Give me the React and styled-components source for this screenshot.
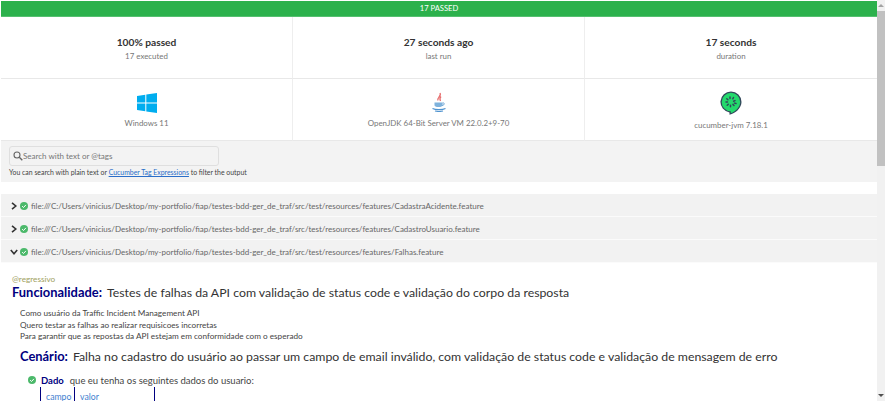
import React from "react";
import styled, { createGlobalStyle } from "styled-components";

const Global = createGlobalStyle`
  html, body { margin: 0; padding: 0; background: #fff; width: 886px; height: 401px; overflow: hidden; }
  * { box-sizing: border-box; }
  body { font-family: Lato, "Open Sans", "Liberation Sans", sans-serif; color: #333; }
`;

const Page = styled.div`
  display: flex;
  width: 886px;
  height: 401px;
  overflow: hidden;
`;
const Main = styled.main`
  width: 877px;
  padding: 1px 0 0 1px;
  overflow: hidden;
  flex: none;
`;
const Scrollbar = styled.div`
  width: 8px;
  height: 401px;
  background: #f1f1f1;
  display: flex;
  flex-direction: column;
  align-items: center;
  justify-content: space-between;
  position: relative;
`;
const Arrow = styled.div`
  width: 0;
  height: 0;
  margin: 4px 0;
  border-left: 3px solid transparent;
  border-right: 3px solid transparent;
  ${(p) => (p.$down ? "border-top: 3px solid #505050;" : "border-bottom: 3px solid #a3a3a3;")}
`;
const Thumb = styled.div`
  position: absolute;
  top: 11px;
  left: 0;
  width: 8px;
  height: 155px;
  background: #c1c1c1;
`;
const Banner = styled.div`
  height: 16px;
  background: #2cb14c;
  color: #fff;
  font-size: 7.6px;
  line-height: 15px;
  text-align: center;
  border-bottom: 1px solid #55c070;
`;
const Grid = styled.section`
  display: grid;
  grid-template-columns: repeat(3, 1fr);
  grid-auto-rows: 62px;
`;
const Cell = styled.div`
  display: flex;
  flex-direction: column;
  align-items: center;
  justify-content: center;
  padding-top: 2px;
  border-right: 1px solid #eeeeee;
  border-bottom: 1px solid #e8e8e8;
  &:nth-child(3n) { border-right: 0; }
`;
const Big = styled.div`
  font-size: 10.2px;
  font-weight: 700;
  line-height: 14px;
  color: #333;
`;
const Small = styled.div`
  font-size: 7.9px;
  line-height: 12px;
  color: #777;
  margin-top: ${(p) => p.$gap || 0}px;
`;
const SearchArea = styled.section`
  height: 41px;
  background: #f3f3f3;
  padding: 5px 8px 0;
`;
const SearchBox = styled.div`
  width: 210px;
  height: 20px;
  display: flex;
  align-items: center;
  padding-left: 3px;
  border: 1px solid #dfdfdf;
  border-radius: 3px;
  font-size: 8px;
  color: #767676;
`;
const Help = styled.div`
  font-size: 6.9px;
  line-height: 9px;
  margin-top: 2px;
  color: #444;
`;
const HelpLink = styled.a`
  color: #2a6ec9;
  text-decoration: underline;
`;
const Features = styled.section`
  margin-top: 12px;
`;
const Row = styled.div`
  height: 23px;
  background: #f2f2f2;
  display: flex;
  align-items: center;
  padding: 1px 0 0 9px;
  gap: 2px;
  font-size: 8px;
  color: #666;
  border-bottom: 1px solid #fbfbfb;
`;
const Chevron = styled.svg`
  width: 8px;
  height: 8px;
  flex: none;
  stroke: #333;
  stroke-width: 1.6;
  fill: none;
`;
const Check = styled.svg`
  width: 8px;
  height: 8px;
  flex: none;
  margin-right: 1px;
`;
const Body = styled.article`
  padding: 11px 0 0 11px;
`;
const Tag = styled.div`
  font-size: 8.2px;
  line-height: 10px;
  color: #a0a060;
`;
const Feature = styled.h1`
  margin: 0;
  font-size: 12.3px;
  line-height: 16px;
  font-weight: 400;
  color: #333;
  white-space: nowrap;
`;
const Keyword = styled.span`
  font-size: 12.9px;
  font-weight: 700;
  color: #000080;
  margin-right: ${(p) => p.$gap || 5}px;
`;
const Description = styled.div`
  margin: 7px 0 0 8px;
  font-size: 8.2px;
  line-height: 11.5px;
  color: #444;
`;
const Scenario = styled(Feature)`
  margin: 5px 0 0 8px;
`;
const Step = styled.div`
  display: flex;
  align-items: center;
  margin: 9px 0 0 16px;
  font-size: 9.5px;
  line-height: 13px;
  color: #444;
`;
const StepKeyword = styled.span`
  font-weight: 700;
  color: #000080;
  margin: 0 6px 0 4px;
`;
const Table = styled.div`
  display: flex;
  margin: 0 0 0 28px;
  height: 20px;
  border-left: 1px solid #000080;
`;
const Column = styled.div`
  width: ${(p) => p.$w}px;
  padding: 4px 0 0 5px;
  font-size: 8.7px;
  line-height: 11px;
  color: #3f7fd0;
  border-right: 1px solid #000080;
`;

const Ok = () => (
  <Check viewBox="0 0 16 16">
    <circle cx="8" cy="8" r="8" fill="#4cb96b" />
    <path d="M4.2 8.3 7 11l4.8-5.2" stroke="#fff" strokeWidth="2" fill="none" />
  </Check>
);
const Windows = () => (
  <svg width="20" height="20" viewBox="0 0 20 20">
    <path fill="#00adef" d="M0 3 8.300 1.800V9.400H0ZM9.300 1.600 20 0V9.400H9.300ZM0 10.500H8.300V18.200L0 17ZM9.300 10.500H20V20L9.300 18.400Z" />
  </svg>
);
const Java = () => (
  <svg width="20" height="20" viewBox="0 0 20 20" fill="none">
    <path d="M11 1C13 4 7.500 5.500 9 8.500M12 4.500C10.500 6 10.500 7 11.500 9" stroke="#e76f6f" strokeWidth="1.300" />
    <path d="M5.500 10.500h8v2.500c0 1.500-1.500 2-4 2s-4-.5-4-2Z" fill="#7fb2dc" />
    <path d="M13.500 11c2.500-.5 2.500 2-.5 2.500" stroke="#5a9bd0" strokeWidth=".9" />
    <path d="M3.500 16.500c3 1.500 10 1.500 13 0M6 19c2 .5 6 .5 8 0" stroke="#4f93cf" strokeWidth="1.100" />
  </svg>
);
const Cucumber = () => (
  <svg width="22" height="24" viewBox="0 0 22 24">
    <path fill="#32475b" d="M11 .5A10.500 10.500 0 0 0 9.500 21.400V23.800C15.500 22.500 21.500 17 21.500 11A10.500 10.500 0 0 0 11 .5Z" />
    <path fill="#23d96c" d="M11 1.800A9.200 9.200 0 0 0 10.800 20.200V22.200C15.500 20.800 20.200 16 20.200 11A9.200 9.200 0 0 0 11 1.800Z" />
    <g stroke="#32475b" strokeWidth="1.500" strokeLinecap="round">
      <path d="M10 6v1.500M13.500 6.500l-.7 1.300M6.800 7.800l1.100 1M6 11h1.500M15 9.600l-1.400.6M7.200 14.200l1.100-1M10.500 15.800v-1.500M14 14.500l-1-1.100M16 12.500l-1.500-.4" />
    </g>
  </svg>
);
const Search = () => (
  <svg width="10" height="10" viewBox="0 0 10 10" fill="none" stroke="#666" strokeWidth="1.100">
    <circle cx="4" cy="4" r="3" />
    <path d="m6.300 6.300 3 3" strokeWidth="1.400" />
  </svg>
);
const Right = () => <Chevron viewBox="0 0 8 8"><path d="M2 .8 5.800 4 2 7.200" /></Chevron>;
const Down = () => <Chevron viewBox="0 0 8 8"><path d="M.8 2 4 5.800 7.200 2" /></Chevron>;

const base = "file:///C:/Users/vinicius/Desktop/my-portfolio/fiap/testes-bdd-ger_de_traf/src/test/resources/features/";

export default function App() {
  return (
    <Page>
      <Global />
      <Main>
        <Banner>17 PASSED</Banner>
        <Grid>
          <Cell><Big>100% passed</Big><Small $gap={1}>17 executed</Small></Cell>
          <Cell><Big>27 seconds ago</Big><Small $gap={1}>last run</Small></Cell>
          <Cell><Big>17 seconds</Big><Small $gap={1}>duration</Small></Cell>
          <Cell><Windows /><Small $gap={4}>Windows 11</Small></Cell>
          <Cell><Java /><Small $gap={5}>OpenJDK 64-Bit Server VM 22.0.2+9-70</Small></Cell>
          <Cell><Cucumber /><Small $gap={4}>cucumber-jvm 7.18.1</Small></Cell>
        </Grid>
        <SearchArea>
          <SearchBox><Search />Search with text or @tags</SearchBox>
          <Help>You can search with plain text or <HelpLink>Cucumber Tag Expressions</HelpLink> to filter the output</Help>
        </SearchArea>
        <Features>
          <Row><Right /><Ok />{base}CadastraAcidente.feature</Row>
          <Row><Right /><Ok />{base}CadastroUsuario.feature</Row>
          <Row><Down /><Ok />{base}Falhas.feature</Row>
        </Features>
        <Body>
          <Tag>@regressivo</Tag>
          <Feature><Keyword>Funcionalidade:</Keyword>Testes de falhas da API com validação de status code e validação do corpo da resposta</Feature>
          <Description>
            Como usuário da Traffic Incident Management API<br />
            Quero testar as falhas ao realizar requisicoes incorretas<br />
            Para garantir que as repostas da API estejam em conformidade com o esperado
          </Description>
          <Scenario><Keyword>Cenário:</Keyword>Falha no cadastro do usuário ao passar um campo de email inválido, com validação de status code e validação de mensagem de erro</Scenario>
          <Step><Ok /><StepKeyword>Dado</StepKeyword>que eu tenha os seguintes dados do usuario:</Step>
          <Table><Column $w={34}>campo</Column><Column $w={80}>valor</Column></Table>
        </Body>
      </Main>
      <Scrollbar>
        <Arrow />
        <Thumb />
        <Arrow $down />
      </Scrollbar>
    </Page>
  );
}
